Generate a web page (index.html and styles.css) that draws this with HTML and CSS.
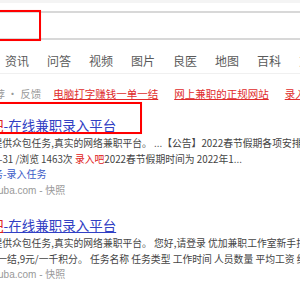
FILE: index.html
```html
<!DOCTYPE html>
<html lang="zh-CN">
<head>
<meta charset="utf-8">
<title>录入吧 - 搜索</title>
<link rel="stylesheet" href="styles.css">
</head>
<body>
<div class="page">
  <div class="topbar"></div>
  <div class="search">
    <div class="input"></div>
    <div class="mark mark-search"></div>
  </div>
  <nav class="tabs">
    <span class="tab">网页</span>
    <span class="tab">资讯</span>
    <span class="tab">问答</span>
    <span class="tab">视频</span>
    <span class="tab">图片</span>
    <span class="tab">良医</span>
    <span class="tab">地图</span>
    <span class="tab">百科</span>
    <span class="tab">文库</span>
  </nav>
  <div class="related">
    <span class="fb">相关推荐 · 反馈</span>
    <a class="rel">电脑打字赚钱一单一结</a>
    <a class="rel">网上兼职的正规网站</a>
    <a class="rel">录入吧兼职靠谱吗</a>
  </div>
  <div class="result first">
    <div class="mark mark-title"></div>
    <h3 class="title"><a><em>录入吧</em>-在线兼职录入平台</a></h3>
    <p class="desc">录入吧提供众包任务,真实的网络兼职平台。 ...【公告】2022春节假期各项安排通知</p>
    <p class="desc">2022-01-31 /浏览 1463次 <em>录入吧</em>2022春节假期时间为 2022年1...</p>
    <p class="sub">新手任务-录入任务</p>
    <p class="url">www.luruba.com - 快照</p>
  </div>
  <div class="result second">
    <h3 class="title"><a><em>录入吧</em>-在线兼职录入平台</a></h3>
    <p class="desc">录入吧提供众包任务,真实的网络兼职平台。 您好,请登录 优加兼职工作室新手指南</p>
    <p class="desc">钱, 一单一结,9元/一千积分。 任务名称 任务类型 工作时间 人员数量 平均工资 结算方式</p>
    <p class="url">www.luruba.com - 快照</p>
  </div>
</div>
</body>
</html>
```
FILE: styles.css
```css
html, body {
  margin: 0;
  padding: 0;
  background: #fff;
  overflow: hidden;
}
body {
  font-family: "Noto Sans CJK SC", sans-serif;
  color: #333;
}
.page {
  position: relative;
  margin-left: -37px;
  width: 600px;
}
.topbar {
  height: 3px;
  background: #f4f4f4;
}
.search {
  position: relative;
  margin-top: 8px;
}
.input {
  height: 25px;
  border-top: 2px solid #d8d8d8;
  border-bottom: 2px solid #d8d8d8;
  width: 600px;
}
.mark {
  position: absolute;
  border: 2px solid #ff0000;
  box-shadow: 0 0 0.6px rgba(255, 0, 0, 0.6);
}
.mark-search {
  left: 0;
  top: -1px;
  width: 74px;
  height: 27px;
}
.tabs {
  display: flex;
  gap: 18px;
  margin-top: 11px;
  height: 20px;
  padding-bottom: 2px;
  border-bottom: 1px solid #f0f0f0;
  font-size: 12px;
  line-height: 20px;
  color: #5a5a5a;
  white-space: nowrap;
}
.related {
  display: flex;
  margin-top: 12px;
  font-size: 10.5px;
  line-height: 16px;
  white-space: nowrap;
}
.fb {
  color: #999;
  margin-right: 12px;
}
.rel {
  color: #e02b2b;
  text-decoration: underline;
  margin-right: 16px;
}
.result {
  position: relative;
  white-space: nowrap;
}
.result.first {
  padding-top: 14px;
}
.result.second {
  margin-top: 17px;
}
.mark-title {
  left: 0;
  top: 0;
  width: 175px;
  height: 28px;
}
.title {
  margin: 0;
  font-size: 13.5px;
  font-weight: normal;
  line-height: 18px;
}
.title a {
  color: #3140c4;
  text-decoration: underline;
}
.title em {
  font-style: normal;
  color: #e02020;
  text-decoration: underline;
}
.desc {
  margin: 0;
  font-size: 9.8px;
  line-height: 16px;
  color: #444;
}
.result .desc:first-of-type {
  margin-top: 1px;
}
.desc em {
  font-style: normal;
  color: #e02020;
}
.sub {
  margin: 0;
  font-size: 10px;
  line-height: 14px;
  color: #3a5bc7;
}
.url {
  margin: 2px 0 0;
  font-family: "Liberation Sans", "Noto Sans CJK SC", sans-serif;
  font-size: 10px;
  line-height: 16px;
  color: #999;
}
.result.second .url {
  margin-top: 0;
}
```
